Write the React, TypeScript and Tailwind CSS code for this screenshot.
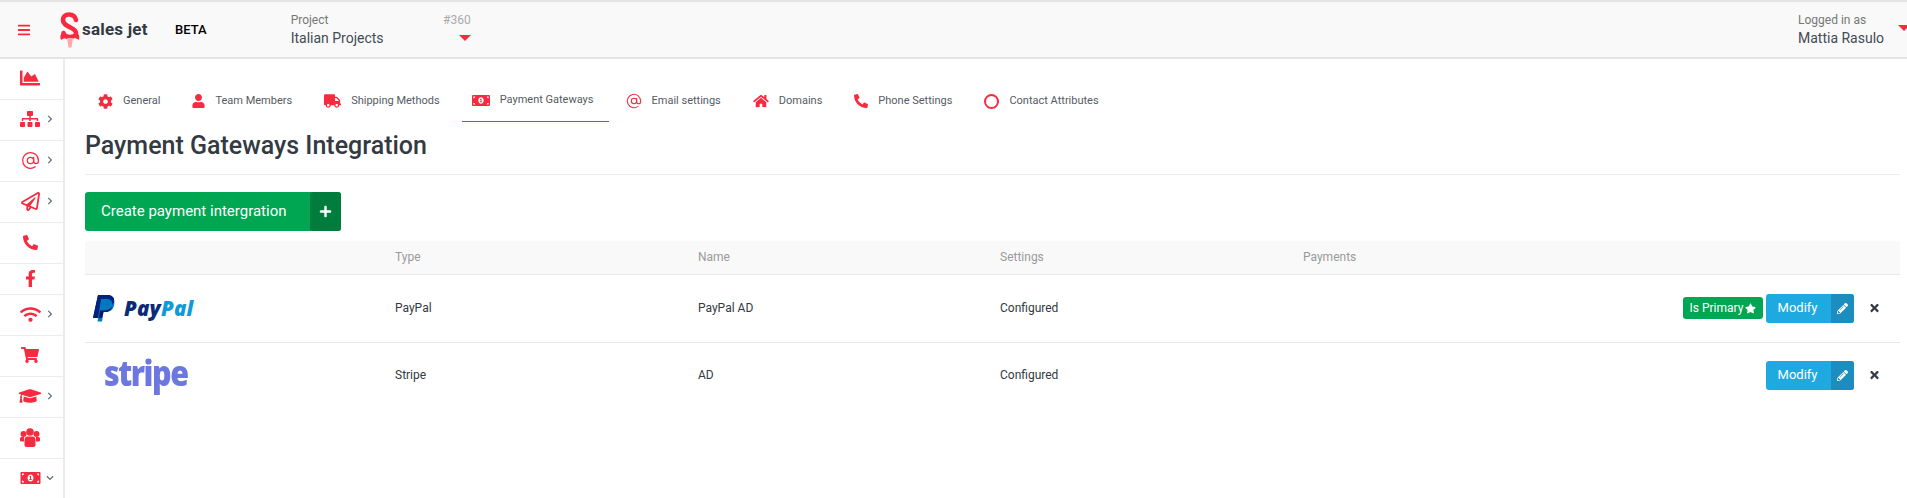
import type { ReactNode } from "react";
import { AtSign } from "lucide-react";
import {
  FaBars,
  FaChartArea,
  FaChevronDown,
  FaChevronRight,
  FaCog,
  FaFacebookF,
  FaGraduationCap,
  FaHome,
  FaMoneyBillAlt,
  FaPencilAlt,
  FaPhoneAlt,
  FaPlus,
  FaRegPaperPlane,
  FaShoppingCart,
  FaSitemap,
  FaStar,
  FaTimes,
  FaTruck,
  FaUser,
  FaWifi,
} from "react-icons/fa";

type SideItem = {
  icon: ReactNode;
  arrow?: "right" | "down";
  short?: boolean;
};

function UsersIcon() {
  return (
    <svg width="20" height="19" viewBox="0 0 20 19" fill="currentColor" className="shrink-0">
      <circle cx="3.500" cy="6" r="3" />
      <circle cx="16.500" cy="6" r="3" />
      <circle cx="10" cy="4" r="3.800" />
      <path d="M0 10.500c0-1 1-1.500 2-1.500h2v4.500H1.500C.5 13.500 0 13 0 12zM20 10.500c0-1-1-1.500-2-1.500h-2v4.500h2.500c1 0 1.500-.5 1.500-1.500z" />
      <path d="M4.500 12c0-2.500 1.500-3.500 3-3.500h5c1.500 0 3 1 3 3.500v5c0 1.200-.8 2-2 2h-7c-1.200 0-2-.8-2-2z" />
    </svg>
  );
}

const sideItems: SideItem[] = [
  { icon: <FaChartArea className="h-[20px] w-[22px] shrink-0" /> },
  { icon: <FaSitemap className="h-[18px] w-[20px] shrink-0" />, arrow: "right" },
  { icon: <AtSign className="h-[19px] w-[19px] shrink-0" strokeWidth={1.6} />, arrow: "right" },
  { icon: <FaRegPaperPlane className="h-[19px] w-[19px] shrink-0" />, arrow: "right" },
  { icon: <FaPhoneAlt className="h-[15px] w-[15px] shrink-0" /> },
  { icon: <FaFacebookF className="h-[17px] w-[11px] shrink-0" />, short: true },
  { icon: <FaWifi className="h-[17px] w-[21px] shrink-0" />, arrow: "right" },
  { icon: <FaShoppingCart className="h-[16px] w-[18px] shrink-0" /> },
  { icon: <FaGraduationCap className="h-[18px] w-[24px] shrink-0" />, arrow: "right" },
  { icon: <UsersIcon /> },
  { icon: <FaMoneyBillAlt className="h-[16px] w-[21px] shrink-0" />, arrow: "down" },
];

const tabs = [
  { label: "General", icon: <FaCog className="h-[15px] w-[15px]" /> },
  { label: "Team Members", icon: <FaUser className="h-[14px] w-[13px]" /> },
  { label: "Shipping Methods", icon: <FaTruck className="h-[14px] w-[17px]" /> },
  { label: "Payment Gateways", icon: <FaMoneyBillAlt className="h-[15px] w-[18px]" />, active: true },
  { label: "Email settings", icon: <AtSign className="h-[16px] w-[16px]" strokeWidth={1.6} /> },
  { label: "Domains", icon: <FaHome className="h-[14px] w-[16px]" /> },
  { label: "Phone Settings", icon: <FaPhoneAlt className="h-[14px] w-[14px]" /> },
  {
    label: "Contact Attributes",
    icon: <span className="block h-[15px] w-[15px] rounded-full border-2 border-[#f72b3f]" />,
  },
];

function SalesJetMark() {
  return (
    <svg width="20" height="36" viewBox="0 0 20 36" className="shrink-0">
      <path
        d="M16 8C15 4 12 2.500 9 2.500 5 2.500 3 5 3 8c0 4 3.500 5.500 7.500 7.500 3.500 1.700 5.500 3 5.500 5.500 0 2.500-2.500 4-6 4s-6-1.500-6.500-4"
        fill="none"
        stroke="#f72b3f"
        strokeWidth="4.6"
        strokeLinecap="round"
      />
      <path d="M9.500 5c1.200 1 1.700 2.300 1.500 4l-1.500 1L8 9c-.2-1.700.3-3 1.500-4z" fill="#ffffff" />
      <path d="M2 21c-2 1.500-2 5-1 7 1.500-1 3-1.500 4-2zM17.500 21c2 1.500 2 5 1.500 7-1.500-1-3-1.500-4-2z" fill="#f72b3f" />
      <path d="M7 26h6l-1.500 9.500h-3z" fill="#f9a9b1" />
    </svg>
  );
}

function PayPalLogo() {
  return (
    <div className="flex items-center">
      <svg width="22" height="27" viewBox="0 0 22 27" className="shrink-0">
        <path d="M5 0h9c5 0 8 2.500 7 7.500-1 5.500-5 8-10 8H8.500L7 23H0z" fill="#00237f" />
        <path d="M8 4h8.500c4 0 5.500 2.500 4.700 6-1 4.500-4 7-8.700 7h-2L9 26.500H4.500z" fill="#0079c1" />
        <path d="M7 15.500h4c3.500 0 6.500-1.300 8.300-4-1 3.800-4 5.500-7.300 5.500h-1.500L9 23H6z" fill="#00186a" />
        <path d="M5 0h9c5 0 8 2.500 7 7.500-1 1-2 2.500-2 2.500 1-4-2-6-5-6H8L5.500 15.500 4 23H0z" fill="#00237f" />
      </svg>
      <span className="ml-[9px] text-[20.500px] leading-none font-extrabold italic tracking-[0.2px] font-['Open_Sans',sans-serif]">
        <span className="text-[#0b2a78]">Pay</span>
        <span className="text-[#0f9ad8]">Pal</span>
      </span>
    </div>
  );
}

function StripeLogo() {
  return (
    <span className="ml-[11px] block origin-left -translate-y-[3px] scale-x-[0.87] text-[35px] leading-none font-extrabold tracking-[-1.700px] text-[#6c78e0] blur-[0.5px] font-['Open_Sans',sans-serif]">
      stripe
    </span>
  );
}

function ModifyButton() {
  return (
    <button className="flex h-[29px] w-[88px] overflow-hidden rounded-[3px] bg-[#1fa9e1] text-[13px] text-white">
      <span className="flex-1 pr-[2px] leading-[27px]">Modify</span>
      <span className="flex w-[23px] items-center justify-center bg-[#1b8dbf]">
        <FaPencilAlt className="h-[11px] w-[11px]" />
      </span>
    </button>
  );
}

function PaymentRow({
  logo,
  type,
  name,
  primary,
}: {
  logo: ReactNode;
  type: string;
  name: string;
  primary?: boolean;
}) {
  return (
    <div className="grid h-[66px] grid-cols-[310px_303px_302px_303px_1fr] items-center text-[12px] text-[#333a42]">
      <div className="pl-[8px]">{logo}</div>
      <div>{type}</div>
      <div>{name}</div>
      <div>Configured</div>
      <div className="flex items-center justify-end pr-[20px]">
        {primary && (
          <span className="mr-[3px] flex h-[22px] w-[80px] items-center justify-center gap-[2px] rounded-[3px] bg-[#00a651] text-[12px] text-white">
            Is Primary <FaStar className="h-[11px] w-[11px]" />
          </span>
        )}
        <ModifyButton />
        <FaTimes className="ml-[15px] h-[12px] w-[11px] text-[#333a42]" />
      </div>
    </div>
  );
}

export default function App() {
  return (
    <div className="h-[498px] overflow-hidden bg-white font-['Roboto',sans-serif]">
      {/* HEADER */}
      <header className="flex h-[59px] items-center border-t-2 border-b-2 border-[#e4e4e4] bg-[#f9f9f9]">
        <FaBars className="ml-[17px] h-[14px] w-[14px] text-[#f72b3f]" />
        <div className="ml-[29px] flex w-[115px] items-center gap-[2px]">
          <SalesJetMark />
          <span className="text-[17px] font-bold tracking-[0.2px] whitespace-nowrap text-[#333a42]">sales jet</span>
        </div>
        <span className="text-[13px] font-medium text-black">BETA</span>
        <div className="ml-[84px] w-[180px]">
          <div className="flex justify-between pt-[2px] text-[12px] leading-[15px] text-[#777]">
            <span>Project</span>
            <span className="text-[#aaa]">#360</span>
          </div>
          <div className="flex items-center justify-between text-[14px] leading-[20px] text-[#444b54]">
            <span>Italian Projects</span>
            <span className="h-0 w-0 border-x-[6px] border-t-[6px] border-x-transparent border-t-[#f72b3f]" />
          </div>
        </div>
        <div className="ml-auto w-[109px]">
          <div className="pt-[2px] text-[12px] leading-[15px] text-[#777]">Logged in as</div>
          <div className="relative text-[14px] leading-[20px] text-[#444b54]">
            Mattia Rasulo
            <span className="absolute top-[-3px] left-[100px] h-0 w-0 border-x-[6px] border-t-[6px] border-x-transparent border-t-[#f72b3f]" />
          </div>
        </div>
      </header>

      <div className="flex">
        {/* SIDEBAR */}
        <aside className="h-[439px] w-[65px] shrink-0 border-r-2 border-[#ececec]">
          {sideItems.map((item, i) => (
            <div
              key={i}
              className={`relative flex items-center border-b border-[#ececec] pb-[2px] pl-[20px] text-[#f72b3f] ${item.short ? "h-[31px]" : "h-[41px]"}`}
            >
              <div className="flex w-[20px] justify-center">{item.icon}</div>
              {item.arrow === "right" && (
                <FaChevronRight className="ml-[6px] h-[8px] w-[8px] text-[#5d6d7e]" />
              )}
              {item.arrow === "down" && (
                <FaChevronDown className="ml-[6px] h-[8px] w-[8px] text-[#5d6d7e]" />
              )}
            </div>
          ))}
        </aside>

        {/* CONTENT */}
        <main className="flex-1 pr-[7px] pl-[20px]">
          <nav className="ml-[3px] flex h-[63px] items-end gap-[7px] text-[11px] text-[#555b63]">
            {tabs.map((tab) => (
              <div
                key={tab.label}
                className={`flex h-[42px] items-center gap-[10px] pr-[15px] pl-[10px] ${tab.active ? "border-b border-[#f72b3f]" : ""}`}
              >
                <span className="text-[#f72b3f]">{tab.icon}</span>
                {tab.label}
              </div>
            ))}
          </nav>

          <h1 className="mt-[10px] border-b border-[#ececec] pb-[14px] text-[25px] leading-[28px] font-medium text-[#333a42]">
            Payment Gateways Integration
          </h1>

          <button className="mt-[17px] flex h-[39px] w-[256px] overflow-hidden rounded-[3px] bg-[#00a651] text-[15px] text-white">
            <span className="flex-1 pl-[16px] text-left leading-[39px]">Create payment intergration</span>
            <span className="flex w-[31px] items-center justify-center rounded-l-[3px] bg-[#007c3d]">
              <FaPlus className="h-[13px] w-[13px]" />
            </span>
          </button>

          {/* TABLE */}
          <div className="mt-[10px]">
            <div className="grid h-[34px] grid-cols-[310px_303px_302px_303px_1fr] items-center border-b border-[#e8e8e8] bg-[#f9f9f9] pb-[1px] text-[12px] text-[#999]">
              <div />
              <div>Type</div>
              <div>Name</div>
              <div>Settings</div>
              <div>Payments</div>
            </div>
            <div className="border-b border-[#e8e8e8] pb-[1px]">
              <PaymentRow logo={<PayPalLogo />} type="PayPal" name="PayPal AD" primary />
            </div>
            <div className="-mt-[1px]">
              <PaymentRow logo={<StripeLogo />} type="Stripe" name="AD" />
            </div>
          </div>
        </main>
      </div>
    </div>
  );
}
